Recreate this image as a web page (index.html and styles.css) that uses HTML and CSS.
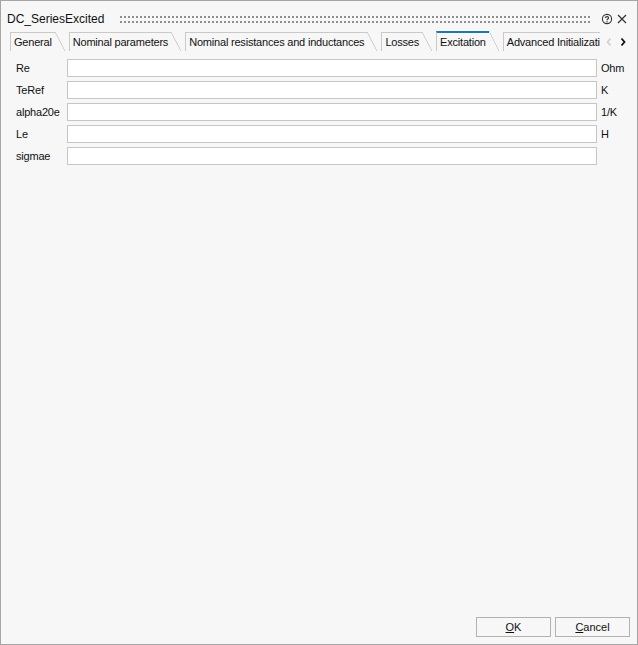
FILE: index.html
```html
<!DOCTYPE html>
<html>
<head>
<meta charset="utf-8">
<link rel="stylesheet" href="styles.css">
</head>
<body>
<div class="window">
  <div class="titlebar">
    <span class="title">DC_SeriesExcited</span>
    <div class="grip"></div>
    <svg class="icon help" width="12" height="12" viewBox="0 0 12 12">
      <circle cx="6" cy="6" r="4.6" fill="none" stroke="#333" stroke-width="1.1"/>
      <path d="M4.4 4.9 C4.4 3.2 7.6 3.2 7.6 4.9 C7.6 6 6 6 6 7.2" fill="none" stroke="#333" stroke-width="1.1"/>
      <circle cx="6" cy="8.7" r="0.7" fill="#333"/>
    </svg>
    <svg class="icon close" width="12" height="12" viewBox="0 0 12 12">
      <path d="M2 2 L10 10 M10 2 L2 10" stroke="#333" stroke-width="1.2"/>
    </svg>
  </div>
  <div class="tabbar">
    <div class="tabs">
      <div class="tab">General</div>
      <div class="tab">Nominal parameters</div>
      <div class="tab">Nominal resistances and inductances</div>
      <div class="tab">Losses</div>
      <div class="tab active">Excitation</div>
      <div class="tab">Advanced Initialization</div>
    </div>
    <div class="arrows">
      <svg width="8" height="10" viewBox="0 0 8 10"><path d="M5.5 1.5 L2.5 5 L5.5 8.5" fill="none" stroke="#cfcfcf" stroke-width="1.6"/></svg>
      <svg width="8" height="10" viewBox="0 0 8 10"><path d="M2.5 1.5 L5.5 5 L2.5 8.5" fill="none" stroke="#111" stroke-width="1.8"/></svg>
    </div>
  </div>
  <div class="content">
    <div class="form">
      <label class="lbl">Re</label><div class="field"></div><span class="unit">Ohm</span>
      <label class="lbl">TeRef</label><div class="field"></div><span class="unit">K</span>
      <label class="lbl">alpha20e</label><div class="field"></div><span class="unit">1/K</span>
      <label class="lbl">Le</label><div class="field"></div><span class="unit">H</span>
      <label class="lbl">sigmae</label><div class="field"></div><span class="unit"></span>
    </div>
  </div>
  <div class="footer">
    <button class="btn"><u>O</u>K</button>
    <button class="btn"><u>C</u>ancel</button>
  </div>
</div>
</body>
</html>
```
FILE: styles.css
```css
html, body {
  margin: 0;
  padding: 0;
}
body {
  background: #f7f7f7;
}
.window {
  width: 638px;
  height: 645px;
  box-sizing: border-box;
  border: 1px solid #a6a6a6;
  background: #f7f7f7;
  display: flex;
  flex-direction: column;
  font-family: "Liberation Sans", Arial, sans-serif;
  font-size: 11px;
  color: #000;
}
.titlebar {
  height: 30px;
  box-sizing: border-box;
  padding: 6px 0 0 6px;
  display: flex;
  align-items: center;
}
.title {
  font-size: 12px;
  color: #111;
}
.grip {
  flex: 1;
  height: 8px;
  margin: 0 11px 0 16px;
  background-image:
    linear-gradient(to right, transparent 2px, #f7f7f7 2px),
    linear-gradient(to bottom, #8e8e8e 2px, transparent 2px);
  background-size: 4px 5px;
  background-position: 0 1px;
  background-repeat: repeat;
}
.icon {
  display: block;
}
.help {
  margin-right: 3px;
}
.close {
  margin-right: 9px;
}
.tabbar {
  height: 20px;
  display: flex;
}
.tabs {
  width: 590px;
  margin-left: 9px;
  display: flex;
  overflow: hidden;
  flex: none;
}
.tab {
  position: relative;
  flex: none;
  display: flex;
  align-items: center;
  margin-top: 1px;
  padding: 0 3px 0 3px;
  margin-right: 14px;
  border-left: 1px solid #c9c9c9;
  border-top: 1px solid #c9c9c9;
  white-space: nowrap;
  letter-spacing: -0.2px;
  color: #111;
}
.tab::after {
  content: "";
  position: absolute;
  left: 100%;
  top: -1px;
  bottom: 0;
  width: 10px;
  background: linear-gradient(to top right, transparent calc(50% - 0.7px), #c4c4c4 50%, transparent calc(50% + 0.7px));
}
.tab.active {
  margin-top: 0;
  border-top: 2px solid #1a7aa8;
}
.tab.active::after {
  top: -2px;
}
.arrows {
  display: flex;
  align-items: center;
  gap: 6px;
  margin-left: 5px;
  padding-top: 1px;
}
.arrows svg {
  display: block;
}
.content {
  flex: 1;
  padding: 8px 0 0 15px;
}
.form {
  display: grid;
  grid-template-columns: 51px 530px auto;
  grid-auto-rows: 18px;
  row-gap: 4px;
  align-items: center;
  letter-spacing: -0.2px;
}
.lbl {
  color: #111;
}
.field {
  height: 18px;
  box-sizing: border-box;
  border: 1px solid #c6c6c6;
  background: #fff;
}
.unit {
  padding-left: 4px;
  color: #111;
}
.footer {
  display: flex;
  justify-content: flex-end;
  gap: 4px;
  padding: 0 7px 7px 0;
}
.btn {
  width: 75px;
  height: 20px;
  box-sizing: border-box;
  border: 1px solid #b2b2b2;
  background: #f7f7f7;
  font-family: "Liberation Sans", Arial, sans-serif;
  font-size: 11px;
  color: #111;
  padding: 0;
  margin: 0;
}
```
